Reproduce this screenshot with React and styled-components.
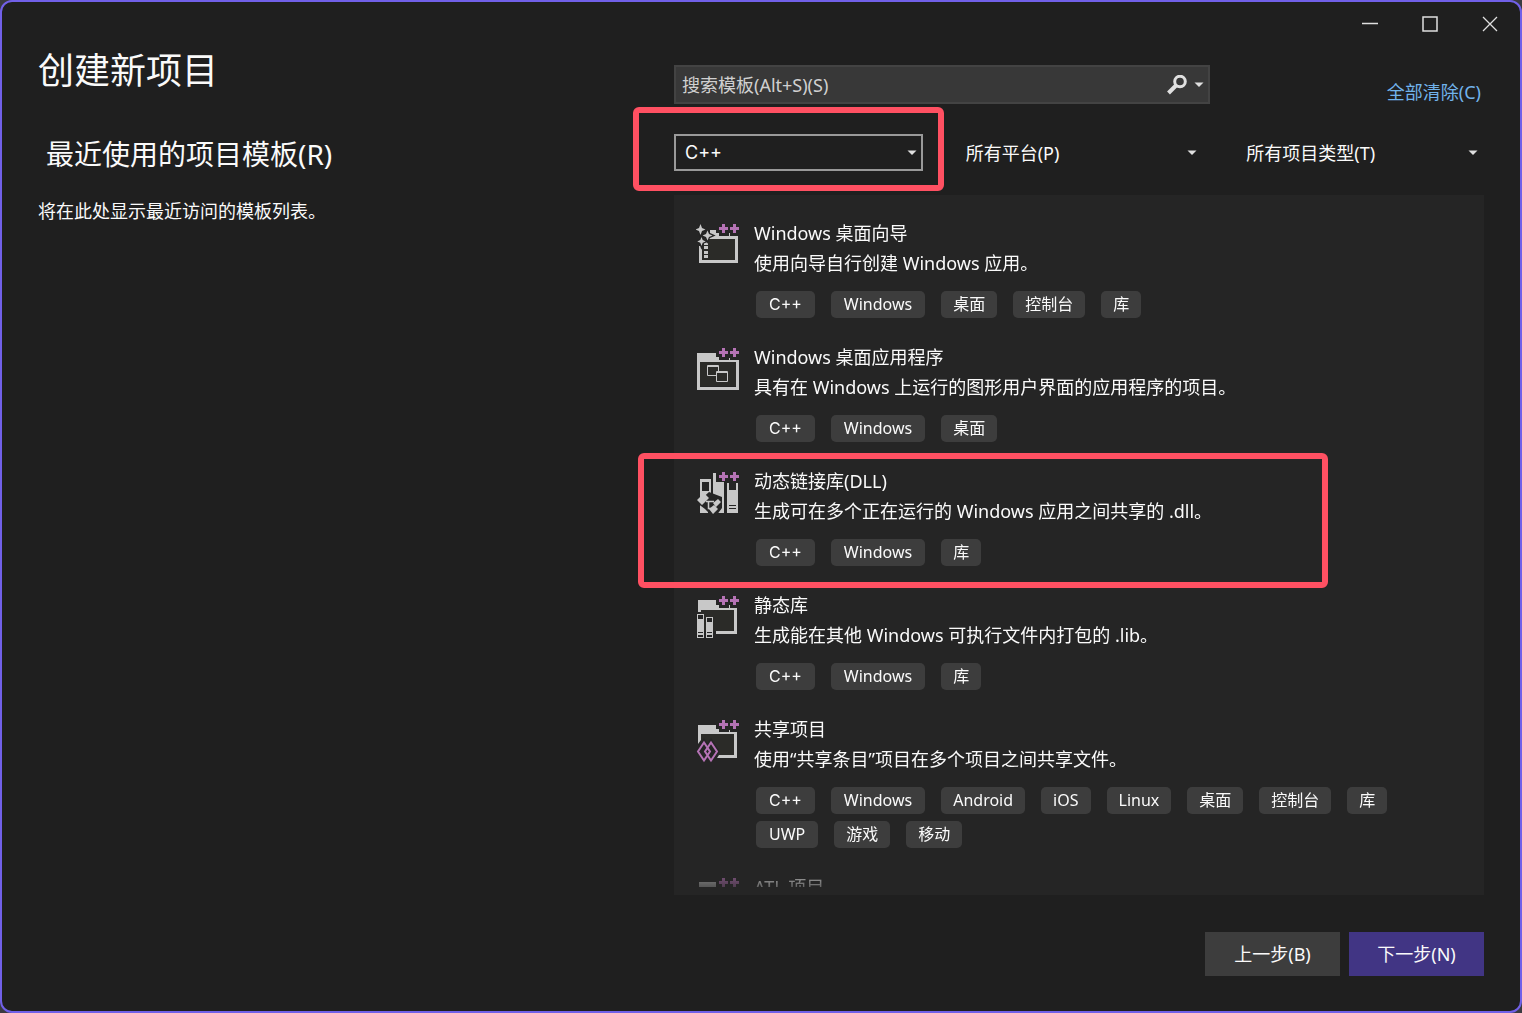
import React from "react";
import styled, { createGlobalStyle } from "styled-components";

const sans = `"Noto Sans", "Noto Sans CJK SC", sans-serif`;
const wide = `Inter, "Noto Sans", sans-serif`;

const GlobalStyle = createGlobalStyle`
  *, *::before, *::after { box-sizing: border-box; }
  body { margin: 0; background: #3a3a40; }
  button, input, select { font: inherit; color: inherit; margin: 0; }
`;

const Window = styled.div`
  display: flex;
  flex-direction: column;
  height: 100vh;
  min-height: 600px;
  border: 2px solid #7160e8;
  border-radius: 12px;
  background: #1f1f1f;
  color: #fafafa;
  font-family: ${sans};
  font-size: 18px;
  line-height: 30px;
  overflow: hidden;
`;

const TitleBar = styled.header`
  display: flex;
  justify-content: flex-end;
  height: 44px;
`;

const CaptionButton = styled.button`
  display: grid;
  place-items: center;
  width: 60px;
  padding: 0;
  border: 0;
  background: none;
`;

const Body = styled.div`
  display: flex;
  flex: 1;
  min-height: 0;
  padding: 0 36px;
`;

const Recent = styled.section`
  flex: 0 0 636px;
`;

const Title = styled.h1`
  margin: 0;
  font-size: 36px;
  line-height: 50px;
  font-weight: 400;
`;

const Subtitle = styled.h2`
  margin: 38px 0 0 8px;
  font-size: 28px;
  line-height: 40px;
  font-weight: 400;
`;

const Note = styled.p`
  margin: 22px 0 0;
`;

const Templates = styled.main`
  display: flex;
  flex: 1;
  flex-direction: column;
  min-width: 0;
  padding-top: 19px;
`;

const SearchRow = styled.div`
  display: flex;
  justify-content: space-between;
  align-items: flex-start;
`;

const SearchBox = styled.div`
  display: flex;
  align-items: center;
  flex: 0 1 536px;
  height: 39px;
  border: 2px solid #434343;
  background: #383838;
`;

const SearchInput = styled.input`
  flex: 1;
  min-width: 0;
  height: 100%;
  padding: 0 6px;
  border: 0;
  outline: 0;
  background: none;
  &::placeholder { color: #d0d0d0; opacity: 1; }
`;

const SearchButton = styled.button`
  display: grid;
  place-items: center;
  width: ${(p) => p.$width}px;
  height: 100%;
  padding: 0;
  border: 0;
  background: none;
`;

const ClearLink = styled.a`
  margin: 12px 3px 0 0;
  color: #71b3ec;
  text-decoration: none;
`;

const Filters = styled.div`
  display: grid;
  grid-template-columns: repeat(3, 1fr);
  gap: 32px;
  margin-top: 27px;
`;

const Filter = styled.div`
  position: relative;
  height: 37px;
`;

const FilterSelect = styled.select`
  appearance: none;
  width: 100%;
  height: 100%;
  padding: 0 24px 0 9px;
  border: 2px solid ${(p) => (p.$focused ? "#999999" : "transparent")};
  border-radius: 0;
  outline: 0;
  background: #1f1f1f;
  font-family: ${(p) => (p.$focused ? wide : sans)};
`;

const FilterArrow = styled.span`
  position: absolute;
  right: 6px;
  top: 16px;
  display: flex;
  pointer-events: none;
`;

const Marker = styled.div`
  position: absolute;
  border: 6px solid #ff5062;
  border-radius: 6px;
  pointer-events: none;
`;

const FilterMarker = styled(Marker)`
  inset: -27px -21px -20px -41px;
`;

const ItemMarker = styled(Marker)`
  top: 258px;
  left: -36px;
  right: 156px;
  height: 135px;
`;

const Panel = styled.div`
  position: relative;
  display: flex;
  flex: 1;
  min-height: 0;
  margin-top: 24px;
  padding-bottom: 8px;
  background: #252525;
`;

const List = styled.ul`
  display: flex;
  flex: 1;
  flex-direction: column;
  gap: 24px;
  margin: 0;
  padding: 23px 32px 0 22px;
  list-style: none;
  overflow: hidden;
  mask-image: linear-gradient(to bottom, #000 calc(100% - 30px), rgba(0, 0, 0, 0.3));
`;

const Item = styled.li`
  display: flex;
  flex: none;
  gap: 14px;
`;

const ItemIcon = styled.svg`
  flex: none;
  width: 44px;
  height: 44px;
  margin-top: 5px;
`;

const ItemTitle = styled.h3`
  margin: 0;
  font-size: 18px;
  font-weight: 400;
`;

const ItemText = styled.p`
  margin: 0;
`;

const Tags = styled.ul`
  display: flex;
  flex-wrap: wrap;
  gap: 7px 16px;
  margin: 13px 0 0 2px;
  padding: 0;
  list-style: none;
`;

const Tag = styled.li`
  height: 27px;
  padding: 0 ${(p) => (p.$roomy ? 13 : 12)}px;
  border-radius: 5px;
  background: #3d3d3d;
  font-family: ${(p) => (p.$wide ? wide : sans)};
  font-size: 16px;
  line-height: 27px;
`;

const Footer = styled.footer`
  display: flex;
  justify-content: flex-end;
  gap: 9px;
  padding: 37px 36px 35px;
`;

const StepButton = styled.button`
  width: 135px;
  height: 44px;
  padding: 0;
  border: 0;
  background: ${(p) => (p.$primary ? "#413584" : "#3d3d3d")};
`;

const Caret = () => (
  <svg width="10" height="6" viewBox="0 0 10 6" aria-hidden="true">
    <path d="M0.5 0.5h9L5 5z" fill="#e0e0e0" />
  </svg>
);

const light = "#c8c8c8";
const inner = "#2b2b28";
const dark = "#252525";
const purple = "#b573b5";

const PlusPlus = () => (
  <path
    d="M26 1h3v3h3v3h-3v3h-3v-3h-3v-3h3zM37 1h3v3h3v3h-3v3h-3v-3h-3v-3h3z"
    fill={purple}
  />
);

const WizardIcon = () => (
  <>
    <path d="M6 16h33v21H6z" fill={inner} />
    <path d="M14 7h6v3h3v3h10v-3h1v3h8v27H3V23h3v14h33V16H12v-3l2-2z" fill={light} />
    <path d="M8 19h4v3H8zM8 23h4v3H8zM8 28h4v3H8zM8 32h4v3H8z" fill={light} />
    <g fill={light} stroke={dark} strokeWidth="2.500" paintOrder="stroke">
      <path d="M4.500 1l1.500 4 3.500 1.500L6 8l-1.500 4L3 8-.5 6.500 3 5z" />
      <path d="M11.500 7.500l1.500 3.500 3.500 1.500-3.500 1.500-1.500 3.500-1.500-3.500-3.500-1.500 3.500-1.500z" />
      <path d="M5.500 14l1.200 3 3 1.500-3 1.200-1.200 3.300-1.200-3.300-3-1.200 3-1.500z" />
    </g>
  </>
);

const DesktopIcon = () => (
  <>
    <path d="M4 15h36v24H4z" fill={inner} />
    <path d="M1 6h19v4h3v3h10v-2h1v2h9v30H1zM4 15v25h36V15z" fill={light} fillRule="evenodd" />
    <path d="M11.500 18.500h11v10h-11zM11 19.500h12" fill="none" stroke={light} />
    <path d="M20.500 24.500h11v10h-11z" fill={inner} stroke={light} />
    <path d="M20 25.500h12" stroke={light} />
  </>
);

const DllIcon = () => (
  <>
    <path d="M4 8h11v34H4zM6 11v9h7v-9z" fill={light} fillRule="evenodd" />
    <path d="M17 2h3v9h8v31H17zM31 12h11v30H31z" fill={light} />
    <path d="M33 9h7v10h-7zM33 34h7v1h-7zM33 37h7v1h-7z" fill={dark} />
    <path d="M1 32l12-11 13 5v11l-6 8h-8v-4l-3-3z" fill={dark} />
    <path d="M4 39h4v3H4zM26 36h2v2h-2zM25 40h3v2h-3z" fill={light} />
    <path
      d="M1 29l7-7 5 5-7 7zM17 32l5-4 3 3-5 5zM13 38l5-4 4 4-5 5z"
      fill={light}
    />
    <path d="M10 30.500h8M12.500 30v7.500h3" fill="none" stroke={light} strokeWidth="1.500" />
  </>
);

const StaticLibIcon = () => (
  <>
    <path d="M5 15h33v21H5z" fill={inner} />
    <path d="M2 5h18v5h3v3h10v-3h1v3h7v26H20v-3h18V15H5v2H2z" fill={light} />
    <path d="M1 19h7v24H1zM10 22h7v21h-7z" fill={light} />
    <path
      d="M2 20h5v4H2zM11 23h5v4h-5zM2 37h5v1H2zM2 40h5v2H2zM11 37h5v1h-5zM11 40h5v2h-5z"
      fill={dark}
    />
  </>
);

const SharedIcon = () => (
  <>
    <path d="M5 15h33v21H5z" fill={inner} />
    <path d="M2 6h18v4h3v3h10v-2h1v2h7v26H21l2-3h15V15H5v6l-3 4z" fill={light} />
    <path
      d="M8 22.500l6.500 10-6.500 10-6.500-10zM15 22.500l6.500 10-6.500 10-6.500-10z"
      fill={dark}
      stroke={dark}
      strokeWidth="4"
    />
    <path
      d="M8 23.500l6 9-6 9-6-9zM15 23.500l6 9-6 9-6-9z"
      fill="none"
      stroke={purple}
      strokeWidth="2"
    />
  </>
);

const AtlIcon = () => <path d="M3 5h17v5h3v3h19v27H3z" fill={light} />;

const templates = [
  {
    icon: WizardIcon,
    title: "Windows 桌面向导",
    text: "使用向导自行创建 Windows 应用。",
    tags: ["C++", "Windows", "桌面", "控制台", "库"],
  },
  {
    icon: DesktopIcon,
    title: "Windows 桌面应用程序",
    text: "具有在 Windows 上运行的图形用户界面的应用程序的项目。",
    tags: ["C++", "Windows", "桌面"],
  },
  {
    icon: DllIcon,
    title: "动态链接库(DLL)",
    text: "生成可在多个正在运行的 Windows 应用之间共享的 .dll。",
    tags: ["C++", "Windows", "库"],
  },
  {
    icon: StaticLibIcon,
    title: "静态库",
    text: "生成能在其他 Windows 可执行文件内打包的 .lib。",
    tags: ["C++", "Windows", "库"],
  },
  {
    icon: SharedIcon,
    title: "共享项目",
    text: "使用“共享条目”项目在多个项目之间共享文件。",
    tags: [
      "C++", "Windows", "Android", "iOS", "Linux", "桌面", "控制台", "库",
      "UWP", "游戏", "移动",
    ],
  },
  { icon: AtlIcon, title: "ATL 项目", text: "", tags: [] },
];

const roomyTags = ["C++", "Windows", "UWP"];

function Template({ icon: Icon, title, text, tags }) {
  return (
    <Item>
      <ItemIcon viewBox="0 0 44 44" aria-hidden="true">
        <Icon />
        <PlusPlus />
      </ItemIcon>
      <div>
        <ItemTitle>{title}</ItemTitle>
        {text && <ItemText>{text}</ItemText>}
        {tags.length > 0 && (
          <Tags>
            {tags.map((tag) => (
              <Tag key={tag} $wide={tag === "C++"} $roomy={roomyTags.includes(tag)}>
                {tag}
              </Tag>
            ))}
          </Tags>
        )}
      </div>
    </Item>
  );
}

function FilterBox({ label, option, focused, children }) {
  return (
    <Filter>
      <FilterSelect aria-label={label} $focused={focused}>
        <option>{option}</option>
      </FilterSelect>
      <FilterArrow><Caret /></FilterArrow>
      {children}
    </Filter>
  );
}

export default function App() {
  return (
    <Window>
      <GlobalStyle />
      <TitleBar>
        <CaptionButton aria-label="最小化">
          <svg width="16" height="16" viewBox="0 0 16 16">
            <path d="M0 7.500h16" stroke="#e0e0e0" strokeWidth="1.500" />
          </svg>
        </CaptionButton>
        <CaptionButton aria-label="最大化">
          <svg width="16" height="16" viewBox="0 0 16 16">
            <path d="M1 1h14v14H1z" fill="none" stroke="#e0e0e0" strokeWidth="1.500" />
          </svg>
        </CaptionButton>
        <CaptionButton aria-label="关闭">
          <svg width="16" height="16" viewBox="0 0 16 16">
            <path d="M1 1l14 14M15 1L1 15" stroke="#e0e0e0" strokeWidth="1.300" />
          </svg>
        </CaptionButton>
      </TitleBar>
      <Body>
        <Recent>
          <Title>创建新项目</Title>
          <Subtitle>最近使用的项目模板(R)</Subtitle>
          <Note>将在此处显示最近访问的模板列表。</Note>
        </Recent>
        <Templates>
          <SearchRow>
            <SearchBox>
              <SearchInput aria-label="搜索模板" placeholder="搜索模板(Alt+S)(S)" />
              <SearchButton aria-label="搜索" $width={26}>
                <svg width="20" height="20" viewBox="0 0 20 20">
                  <circle cx="13" cy="6.500" r="5.300" fill="none" stroke="#e0e0e0" strokeWidth="3" />
                  <path d="M9.500 10L1.500 18" stroke="#e0e0e0" strokeWidth="4" />
                </svg>
              </SearchButton>
              <SearchButton aria-label="搜索选项" $width={18}>
                <Caret />
              </SearchButton>
            </SearchBox>
            <ClearLink href="#clear">全部清除(C)</ClearLink>
          </SearchRow>
          <Filters>
            <FilterBox label="语言" option="C++" focused>
              <FilterMarker />
            </FilterBox>
            <FilterBox label="平台" option="所有平台(P)" />
            <FilterBox label="项目类型" option="所有项目类型(T)" />
          </Filters>
          <Panel>
            <List>
              {templates.map((t) => (
                <Template key={t.title} {...t} />
              ))}
            </List>
            <ItemMarker />
          </Panel>
        </Templates>
      </Body>
      <Footer>
        <StepButton>上一步(B)</StepButton>
        <StepButton $primary>下一步(N)</StepButton>
      </Footer>
    </Window>
  );
}
